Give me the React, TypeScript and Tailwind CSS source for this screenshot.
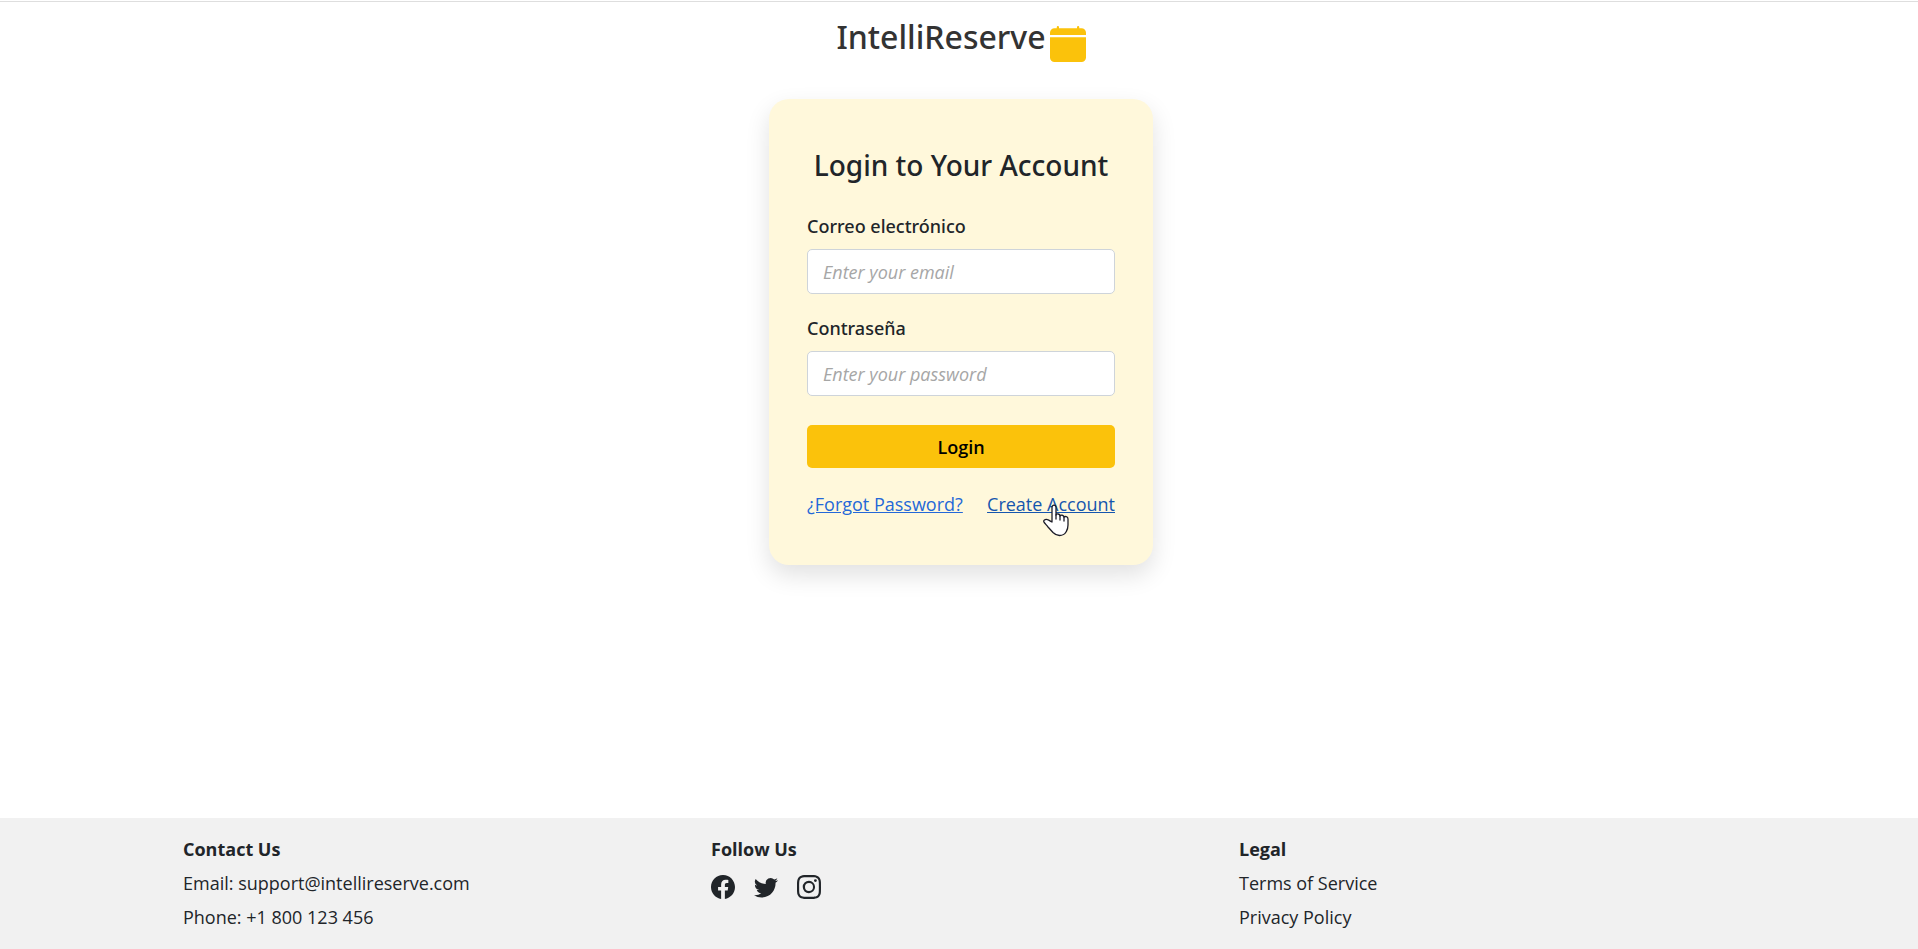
import type { ReactNode } from "react";
import { BsCalendarFill, BsFacebook, BsInstagram, BsTwitter } from "react-icons/bs";

function Field({ id, label, type, placeholder }: { id: string; label: string; type: string; placeholder: string }) {
  return (
    <div>
      <label htmlFor={id} className="mb-2.5 block font-['Noto_Sans',sans-serif] text-[18px] leading-[26px] font-medium text-[#212529]">
        {label}
      </label>
      <input
        id={id}
        type={type}
        placeholder={placeholder}
        className="block h-[45px] w-full rounded-[5px] border border-[#ced4da] bg-white px-[15px] text-[18px] text-[#212529] placeholder:text-[#a6a6a6] placeholder:italic"
      />
    </div>
  );
}

function FooterColumn({ title, children }: { title: string; children: ReactNode }) {
  return (
    <section className="px-4">
      <h2 className="mb-2 font-bold">{title}</h2>
      {children}
    </section>
  );
}

function HandCursor() {
  return (
    <svg
      aria-hidden="true"
      viewBox="0 0 26 34"
      className="pointer-events-none absolute top-3 left-14 h-[34px] w-[26px]"
      fill="#fff"
      stroke="#1c1c28"
      strokeWidth="1.3"
      strokeLinejoin="round"
      strokeLinecap="round"
    >
      <path d="M9 19V4.5C9 1.2 13 1.2 13 4.5V12C13.5 10.4 17 10.6 17 13C17.6 11.6 21 12 21 14.2C21.7 13 25 13.3 25 16V22C25 26 24.2 27 23 29C21.8 31 19.5 32.5 16.5 32.5C13.5 32.5 11.7 31.2 10 29.5L5 24C3.5 22.2 2 20.5 1.2 19.5C-.2 17.5 2.2 15.8 4.5 16.7C6.3 17.3 7.5 18.3 9 19Z" />
      <path d="M13 12V16M17 13V17M21 14.2V18" fill="none" />
    </svg>
  );
}

export default function App() {
  return (
    <div className="flex min-h-screen flex-col bg-white pt-px font-['Open_Sans','Noto_Sans',sans-serif] text-[18px] leading-[26px] text-[#212529]">
      <header className="flex h-[98px] items-start justify-center gap-1 border-t border-[#dedede] pt-3.5 pl-1">
        <h1 className="font-['Noto_Sans',sans-serif] text-[32px] leading-[42px] font-medium text-[#333]">IntelliReserve</h1>
        <BsCalendarFill aria-hidden="true" className="mt-2.5 size-9 text-[#fbc20b]" />
      </header>

      <main className="flex flex-1 items-start justify-center pl-1">
        <form
          onSubmit={(event) => event.preventDefault()}
          className="w-96 rounded-[20px] bg-[#fff8db] px-[38px] py-12 shadow-[0_10px_24px_rgba(0,0,0,0.12)]"
        >
          <h2 className="mb-[30px] text-center font-['Noto_Sans',sans-serif] text-[28px] leading-9 font-medium whitespace-nowrap">
            Login to Your Account
          </h2>
          <div className="flex flex-col gap-[21px]">
            <Field id="email" label="Correo electrónico" type="email" placeholder="Enter your email" />
            <Field id="password" label="Contraseña" type="password" placeholder="Enter your password" />
          </div>
          <button type="submit" className="mt-[29px] block h-[43px] w-full rounded-[5px] bg-[#fbc20b] font-semibold text-black">
            Login
          </button>
          <div className="mt-[23px] flex justify-between whitespace-nowrap">
            <a href="#forgot" className="text-[#2468d8] underline">¿Forgot Password?</a>
            <a href="#create" className="relative text-[#1656ae] underline">
              Create Account
              <HandCursor />
            </a>
          </div>
        </form>
      </main>

      <footer className="bg-[#f1f1f1] pt-[18px] pb-[19px]">
        <div className="mx-auto grid max-w-[1584px] grid-cols-3">
          <FooterColumn title="Contact Us">
            <p className="mb-2">Email: support@intellireserve.com</p>
            <p>Phone: +1 800 123 456</p>
          </FooterColumn>
          <FooterColumn title="Follow Us">
            <div className="flex gap-[19px] pt-[5px]">
              <a href="#facebook" aria-label="Facebook"><BsFacebook className="size-6" /></a>
              <a href="#twitter" aria-label="Twitter"><BsTwitter className="size-6" /></a>
              <a href="#instagram" aria-label="Instagram"><BsInstagram className="size-6" /></a>
            </div>
          </FooterColumn>
          <FooterColumn title="Legal">
            <a href="#terms" className="mb-2 block">Terms of Service</a>
            <a href="#privacy" className="block">Privacy Policy</a>
          </FooterColumn>
        </div>
      </footer>
    </div>
  );
}
